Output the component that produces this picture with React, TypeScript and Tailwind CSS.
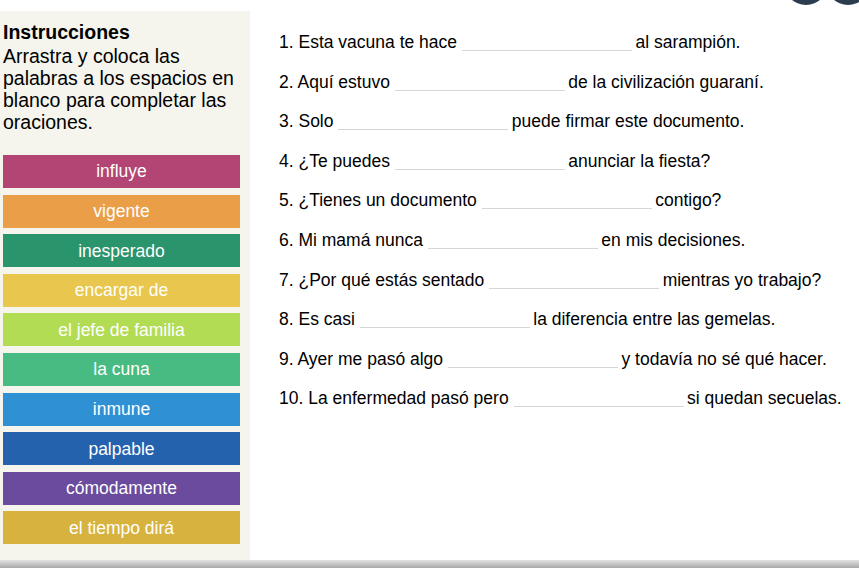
const words = [
  { label: 'influye', color: 'bg-[#b24573]' },
  { label: 'vigente', color: 'bg-[#e99e47]' },
  { label: 'inesperado', color: 'bg-[#2a946d]' },
  { label: 'encargar de', color: 'bg-[#e9c64d]' },
  { label: 'el jefe de familia', color: 'bg-[#b3dc55]' },
  { label: 'la cuna', color: 'bg-[#47bb82]' },
  { label: 'inmune', color: 'bg-[#2f91d4]' },
  { label: 'palpable', color: 'bg-[#2462ae]' },
  { label: 'cómodamente', color: 'bg-[#6b4b9d]' },
  { label: 'el tiempo dirá', color: 'bg-[#d7b23f]' },
]

const sentences: [string, string][] = [
  ['1. Esta vacuna te hace', 'al sarampión.'],
  ['2. Aquí estuvo', 'de la civilización guaraní.'],
  ['3. Solo', 'puede firmar este documento.'],
  ['4. ¿Te puedes', 'anunciar la fiesta?'],
  ['5. ¿Tienes un documento', 'contigo?'],
  ['6. Mi mamá nunca', 'en mis decisiones.'],
  ['7. ¿Por qué estás sentado', 'mientras yo trabajo?'],
  ['8. Es casi', 'la diferencia entre las gemelas.'],
  ['9. Ayer me pasó algo', 'y todavía no sé qué hacer.'],
  ['10. La enfermedad pasó pero', 'si quedan secuelas.'],
]

function Blank() {
  return (
    <span className="inline-block w-[170px] h-0 border-b border-[#d6d6d6] mb-[-3px] mr-[3.5px] align-baseline" />
  )
}

export default function App() {
  return (
    <div className="relative h-[568px] w-[859px] overflow-hidden bg-white flex flex-col font-['Liberation_Sans',Arial,sans-serif]">
      {/* toolbar buttons cut off at the top edge */}
      <div className="absolute left-[784px] top-[-39px] w-[44px] h-[44px] rounded-full bg-[#2c3d4f]" />
      <div className="absolute left-[826px] top-[-39px] w-[44px] h-[44px] rounded-full bg-[#2c3d4f]" />

      <div className="h-[11px] shrink-0" />

      <div className="flex flex-1 min-h-0">
        {/* Left: instructions + word bank */}
        <aside className="w-[250px] shrink-0 bg-[#f5f4ed] pl-[3px] pr-[10px] pt-[9px]">
          <h2 className="text-[19.5px] leading-[25px] font-bold text-black">Instrucciones</h2>
          <p className="text-[19.5px] leading-[22px] text-black">
            Arrastra y coloca las palabras a los espacios en blanco para completar las oraciones.
          </p>

          <div className="mt-[22px] flex flex-col gap-[6.6px]">
            {words.map((w) => (
              <div
                key={w.label}
                className={`${w.color} h-[33px] flex items-center justify-center text-white text-[17.5px]`}
              >
                {w.label}
              </div>
            ))}
          </div>
        </aside>

        {/* Right: sentences */}
        <main className="flex-1 pl-[29px] pt-[12px] text-[17.5px] leading-[39.6px] text-black">
          {sentences.map(([before, after]) => (
            <div key={before} className="whitespace-nowrap">
              {before} <Blank />
              {after}
            </div>
          ))}
        </main>
      </div>

      <div className="h-[8px] shrink-0 bg-gradient-to-b from-[#e2e2e2] to-[#a9a9a9]" />
    </div>
  )
}
